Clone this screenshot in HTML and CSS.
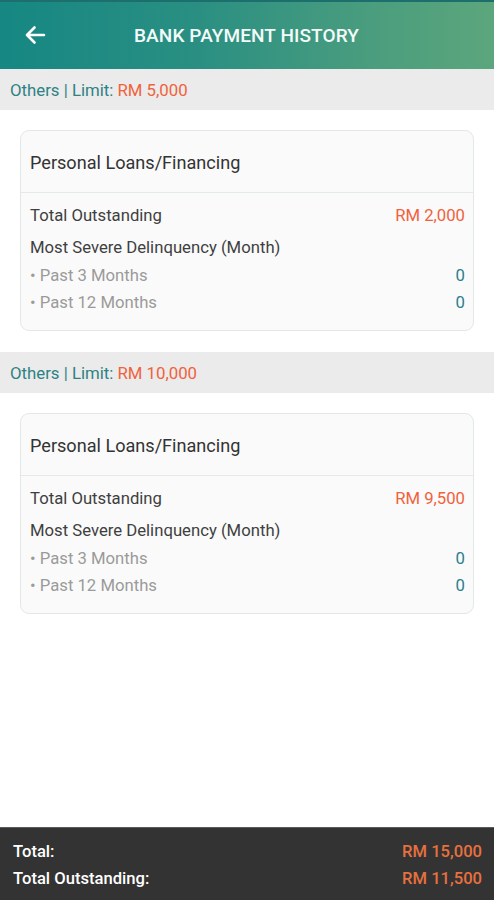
FILE: index.html
```html
<!DOCTYPE html>
<html>
<head>
<meta charset="utf-8">
<link rel="stylesheet" href="styles.css">
</head>
<body>
<div class="app">
  <header class="topbar">
    <span class="back">
      <svg width="22" height="20" viewBox="0 0 22 20"><path d="M20 10H3M10.5 2.5L3 10l7.5 7.5" fill="none" stroke="#fff" stroke-width="2.6" stroke-linecap="round" stroke-linejoin="round"/></svg>
    </span>
    <h1 class="title">BANK PAYMENT HISTORY</h1>
  </header>
  <main class="content">
    <div class="section-bar">Others | Limit: <span class="amt">RM 5,000</span></div>
    <div class="card">
      <div class="card-head">Personal Loans/Financing</div>
      <div class="card-body">
        <div class="row r1"><span class="lbl">Total Outstanding</span><span class="amt">RM 2,000</span></div>
        <div class="row r2"><span class="lbl">Most Severe Delinquency (Month)</span></div>
        <div class="row r3"><span class="sub">• Past 3 Months</span><span class="zero">0</span></div>
        <div class="row r4"><span class="sub">• Past 12 Months</span><span class="zero">0</span></div>
      </div>
    </div>
    <div class="section-bar">Others | Limit: <span class="amt">RM 10,000</span></div>
    <div class="card">
      <div class="card-head">Personal Loans/Financing</div>
      <div class="card-body">
        <div class="row r1"><span class="lbl">Total Outstanding</span><span class="amt">RM 9,500</span></div>
        <div class="row r2"><span class="lbl">Most Severe Delinquency (Month)</span></div>
        <div class="row r3"><span class="sub">• Past 3 Months</span><span class="zero">0</span></div>
        <div class="row r4"><span class="sub">• Past 12 Months</span><span class="zero">0</span></div>
      </div>
    </div>
  </main>
  <footer class="footer">
    <div class="frow"><span>Total:</span><span class="famt">RM 15,000</span></div>
    <div class="frow"><span>Total Outstanding:</span><span class="famt">RM 11,500</span></div>
  </footer>
</div>
</body>
</html>
```
FILE: styles.css
```css
* { box-sizing: border-box; }
html, body { margin: 0; padding: 0; }
body {
  font-family: Roboto, "Liberation Sans", Arial, sans-serif;
  background: #fff;
  width: 494px;
  height: 900px;
  overflow: hidden;
}
.app {
  display: flex;
  flex-direction: column;
  height: 900px;
}
.topbar {
  height: 69px;
  flex: none;
  display: flex;
  align-items: center;
  background: linear-gradient(90deg, #168783 0%, #2a8f82 40%, #4a9d7e 75%, #5ca67c 100%);
  border-top: 2px solid #1c6f6c;
}
.back {
  width: 22px;
  height: 20px;
  margin-left: 24px;
  margin-top: -1px;
  display: flex;
}
.title {
  margin: 0;
  margin-top: -1px;
  flex: 1;
  text-align: center;
  font-size: 19px;
  font-weight: 500;
  color: #f4fbf9;
  padding-right: 47px;
  letter-spacing: 0.1px;
}
.content {
  flex: 1;
  min-height: 0;
}
.section-bar {
  height: 41px;
  background: #ebebeb;
  display: flex;
  align-items: center;
  padding-left: 10px;
  font-size: 16.8px;
  color: #2e8284;
}
.amt { color: #f0623c; margin-left: 4px; }
.card {
  margin: 20px 20px 21px 20px;
  border: 1px solid #e2e8e8;
  border-radius: 9px;
  background: #fafafa;
  height: 201px;
}
.card-head {
  height: 62px;
  border-bottom: 1px solid #e4eaea;
  display: flex;
  align-items: center;
  padding-left: 9px;
  padding-top: 1px;
  font-size: 18.1px;
  color: #333;
}
.card-body {
  padding: 11px 8px 0 9px;
  font-size: 16.7px;
}
.row {
  display: flex;
  justify-content: space-between;
  line-height: 24px;
}
.r2 { margin-top: 8px; }
.r3 { margin-top: 4px; }
.r4 { margin-top: 3px; }
.lbl { color: #3f3f3f; }
.sub { color: #9a9a9a; }
.zero { color: #2b7f8c; }
.footer {
  flex: none;
  height: 73px;
  background: #333;
  border-top: 1px solid #5a5a5a;
  padding: 10px 12px 0 13px;
}
.frow {
  display: flex;
  justify-content: space-between;
  font-size: 16.6px;
  font-weight: 500;
  color: #fff;
  line-height: 27px;
}
.famt { color: #e8703f; }
```
